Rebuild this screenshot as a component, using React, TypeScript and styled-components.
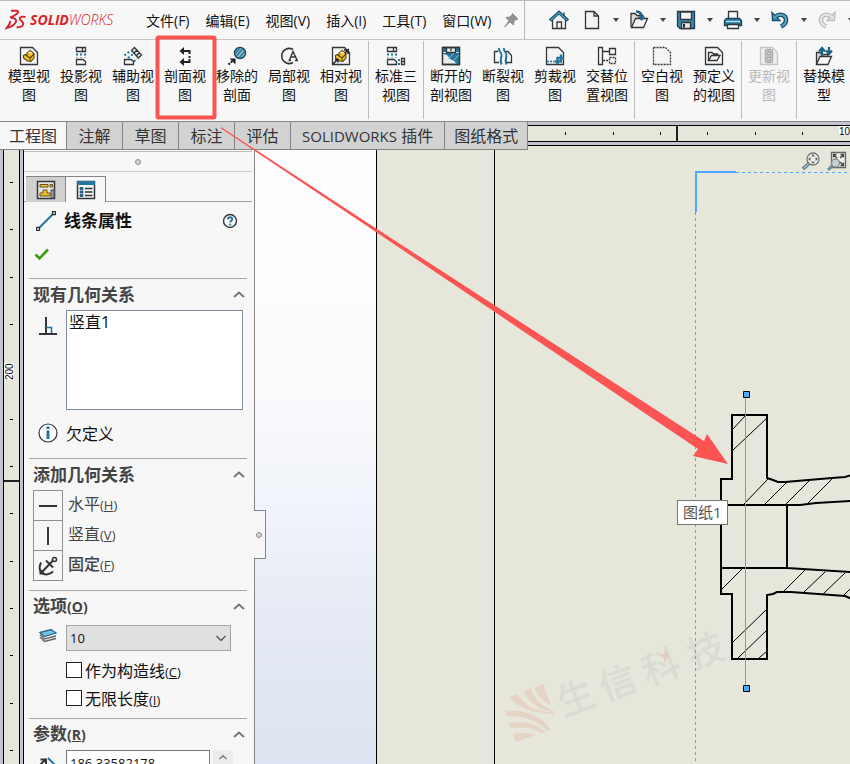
import React from "react";
import styled, { createGlobalStyle } from "styled-components";

const INK = "#333638";
const BLUE = "#24769c";
const YELLOW = "#f2c02c";
const RED = "#fb5452";
const SHEET = "#e6e6da";
const BAND = "#c2c5d0";
const FONT = '"Open Sans", "Noto Sans CJK SC", sans-serif';

const GlobalStyle = createGlobalStyle`
  * { box-sizing: border-box; }
  html, body { margin: 0; height: 100%; overflow: hidden; }
  body { font-family: ${FONT}; font-size: 14px; color: #111; background: #f7f7f7; }
  #root { height: 100%; }
  button, input, select, textarea { font: inherit; color: inherit; }
  svg { display: block; }
`;

const Shell = styled.div`
  position: relative;
  display: flex;
  flex-direction: column;
  height: 100vh;
  overflow: hidden;
`;

/* ---------- title bar ---------- */

const TitleBar = styled.header`
  display: flex;
  flex: none;
  align-items: center;
  height: 40px;
  padding-left: 5px;
  border-top: 1px solid #bcbcbc;
  border-bottom: 1px solid #c4c4c4;
  white-space: nowrap;
  overflow: hidden;
`;

const Brand = styled.div`
  display: flex;
  flex: none;
  align-items: center;
  width: 134px;
  gap: 3px;
  color: #d8232a;
  font: italic 300 14px/20px "Open Sans", sans-serif;

  b { font-weight: 700; }
`;

const Menu = styled.nav`
  display: flex;
  flex: none;
  width: 362px;
  gap: 2px;
`;

const MenuItem = styled.button`
  padding: 2px 7px 0;
  border: 0;
  background: none;
  line-height: 20px;
`;

const Divider = styled.span`
  flex: none;
  width: 1px;
  height: 38px;
  margin: 0 22px 0 3px;
  background: #b9b9b9;
`;

const QuickBar = styled.div`
  display: flex;
  flex: none;
  align-items: center;
`;

const QuickButton = styled.button`
  display: grid;
  place-items: center;
  width: 24px;
  height: 24px;
  padding: 0;
  border: 0;
  background: none;
`;

const CaretButton = styled(QuickButton)`
  width: 23px;
`;

const HomeButton = styled(QuickButton)`
  margin-right: 9px;
`;

/* ---------- ribbon ---------- */

const Ribbon = styled.div`
  display: flex;
  flex: none;
  height: 82px;
  padding-left: 3px;
  border-bottom: 1px solid #858585;
  overflow: hidden;
`;

const RibbonGroup = styled.div`
  display: flex;
  flex: none;

  & + &::before {
    content: "";
    width: 1px;
    height: 78px;
    margin: 1px 1px 0;
    background: #bdbdbd;
  }
`;

const RibbonButton = styled.button`
  display: flex;
  flex-direction: column;
  align-items: center;
  width: 52px;
  padding: 6px 0 0;
  border: 0;
  background: none;
  white-space: pre;
  line-height: 19px;
  color: #111;

  &:disabled { color: #b9b9b9; }
`;

/* ---------- command tabs and rulers ---------- */

const TabRow = styled.div`
  display: flex;
  flex: none;
  height: 28px;
  background: ${SHEET};
`;

const Tab = styled.button<{ $active?: boolean; $pad?: number }>`
  flex: none;
  min-width: 56px;
  height: 28px;
  padding: 0 ${(p) => p.$pad ?? 11}px;
  border: 0;
  border-right: 1px solid #858585;
  border-bottom: 1px solid #858585;
  background: ${(p) => (p.$active ? "#f7f7f7" : "#d2d2d2")};
  color: #333;
  font-size: 16px;
  line-height: 26px;
  white-space: nowrap;

  span { font-size: 15px; }
`;

const HRuler = styled.div`
  flex: 1;
  min-width: 0;
  height: 24px;
  padding: 3px 0;
  border-bottom: 1px solid #000;
  background: ${BAND};
`;

const HScale = styled.div`
  height: 17px;
  border-top: 1px solid #000;
  border-bottom: 1px solid #000;
  background: ${SHEET};
`;

const VRuler = styled.div`
  flex: none;
  width: 24px;
  padding: 0 3px;
  border-right: 1px solid #000;
  background: ${BAND};
`;

const VScale = styled.div`
  width: 17px;
  height: 100%;
  border-left: 1px solid #000;
  border-right: 1px solid #000;
  background: ${SHEET};
`;

const Body = styled.main`
  display: flex;
  flex: 1;
  min-height: 0;
`;

/* ---------- property panel ---------- */

const Panel = styled.aside`
  position: relative;
  z-index: 1;
  flex: none;
  width: 231px;
  border-right: 1px solid #858585;
  background: #f7f7f7;
`;

const Grip = styled.div`
  display: grid;
  place-items: center;
  height: 21px;
  margin: 1px 2px 0 0;
  border-top: 1px solid #bdbdbd;
  border-bottom: 1px solid #c9c9c9;
`;

const GripDot = styled.span`
  width: 6px;
  height: 6px;
  border: 1px solid #8c8c8c;
  border-radius: 50%;
  background: #d4d4d4;
`;

const PanelTabs = styled.div`
  display: flex;
  height: 30px;
  margin-right: 2px;
  padding: 4px 0 0 2px;
  border-bottom: 1px solid #9f9f9f;
`;

const PanelTab = styled.button<{ $active?: boolean }>`
  display: grid;
  place-items: center;
  width: 40px;
  height: 26px;
  padding: 0;
  border: 0;
  border-top: 1px solid #858585;
  border-right: 1px solid #858585;
  background: ${(p) => (p.$active ? "#f7f7f7" : "#d0d0d0")};
`;

const PanelHeader = styled.div`
  display: flex;
  align-items: center;
  gap: 8px;
  height: 38px;
  padding: 0 16px 0 12px;
`;

const PanelTitle = styled.h1`
  flex: 1;
  margin: 0;
  font-size: 17px;
  line-height: 24px;
`;

const IconButton = styled.button`
  display: grid;
  place-items: center;
  padding: 0;
  border: 0;
  background: none;
`;

const ConfirmRow = styled.div`
  display: flex;
  height: 38px;
  padding: 6px 0 16px 10px;
`;

const Section = styled.section`
  margin: 0 7px 0 5px;
  border-top: 1px solid #a6a6a6;
`;

const Key = styled.span`
  font-size: 13px;
`;

const SectionHead = styled.h2`
  display: flex;
  align-items: center;
  justify-content: space-between;
  height: 31px;
  margin: 0;
  padding: 0 1px 0 4px;
  color: #444;
  font-size: 17px;
  line-height: 24px;

  ${Key} { font-size: 14px; }
`;

const FieldGrid = styled.div<{ $end?: number }>`
  display: grid;
  grid-template-columns: 37px minmax(0, 1fr);
  justify-items: center;
  padding-right: ${(p) => p.$end ?? 4}px;
`;

const IconSlot = styled.div`
  padding-top: 6px;
`;

const RelationList = styled.textarea`
  width: 100%;
  height: 100px;
  padding: 0 2px;
  border: 1px solid #7f8aa6;
  outline: 0;
  resize: none;
  background: #fff;
  font-size: 16px;
  line-height: 22px;
`;

const Status = styled.div`
  display: grid;
  grid-template-columns: 37px 1fr;
  align-items: center;
  justify-items: center;
  height: 48px;
  padding-bottom: 2px;
  font-size: 16px;

  p { justify-self: start; margin: 0; }
`;

const RelationButtons = styled.div`
  padding: 0 0 10px 4px;
`;

const RelationButton = styled.button<{ $strong?: boolean }>`
  display: flex;
  align-items: flex-start;
  gap: 5px;
  height: 30px;
  padding: 0;
  border: 0;
  background: none;
  color: #444;
  font-size: 16px;
  font-weight: ${(p) => (p.$strong ? 500 : 400)};
  line-height: 28px;
`;

const RelationIcon = styled.span`
  display: grid;
  place-items: center;
  width: 30px;
  height: 31px;
  border: 1px solid #8e8e8e;
`;

const Options = styled.div`
  padding: 3px 0 6px;
`;

const SelectWrap = styled.div`
  position: relative;
  width: 100%;
  margin-bottom: 5px;

  svg { position: absolute; right: 3px; top: 8px; pointer-events: none; }
`;

const LayerSelect = styled.select`
  appearance: none;
  display: block;
  width: 100%;
  height: 26px;
  padding: 0 3px;
  border: 1px solid #a3a3a3;
  border-radius: 0;
  background: #e0e0e0;
  font-size: 13px;
`;

const CheckLabel = styled.label`
  display: flex;
  align-items: center;
  gap: 3px;
  height: 28px;
  padding-left: 37px;
  font-size: 16px;
`;

const Check = styled.input`
  appearance: none;
  width: 16px;
  height: 16px;
  margin: 0;
  border: 1px solid #222;
  background: #fff;
`;

const NumberRow = styled.div`
  display: flex;
  gap: 3px;
  width: 100%;
`;

const NumberInput = styled.input`
  flex: 1;
  min-width: 0;
  height: 26px;
  padding: 0 3px;
  border: 1px solid #777;
  background: #fff;
  font-size: 13px;
`;

const SpinButton = styled(IconButton)`
  width: 20px;
  height: 14px;
  background: #ececec;
`;

const PanelHandle = styled.button`
  position: absolute;
  left: 100%;
  top: 360px;
  display: grid;
  place-items: center;
  width: 12px;
  height: 49px;
  padding: 0 2px 0 0;
  border: 1px solid #858585;
  border-left: 0;
  background: #f7f7f7;
`;

/* ---------- drawing area ---------- */

const Viewport = styled.div`
  position: relative;
  flex: 1;
  min-width: 0;
  background: linear-gradient(180deg, #fdfdfd 0, #fcfcfd 35%, #f1f4fa 57%, #e6ebf5 75%, #dde3f0 100%);
`;

const Drawing = styled.svg`
  width: 100%;
  height: 100%;
`;

const HudBar = styled.div`
  position: absolute;
  top: 1px;
  right: 3px;
  display: flex;
  gap: 6px;
`;

const SheetTip = styled.div`
  position: absolute;
  left: 422px;
  top: 350px;
  padding: 0 5px;
  border: 1px solid #767676;
  background: #fff;
  color: #555;
  font-size: 15px;
  line-height: 23px;
`;

const Annotation = styled.svg`
  position: absolute;
  left: 0;
  top: 0;
  z-index: 2;
  pointer-events: none;
`;

/* ---------- icons ---------- */

const Icon = ({ children, size = 20 }: { children: React.ReactNode; size?: number }) => (
  <svg width={size} height={size} viewBox={`0 0 ${size} ${size}`} fill="none" stroke={INK} strokeWidth="1.3" aria-hidden="true">
    {children}
  </svg>
);

const Page = ({ fill = "#f4f4f4", color = INK }: { fill?: string; color?: string }) => (
  <path d="M1.5 1.5H13.5L18.5 6.5V18.5H1.5Z" fill={fill} stroke={color} />
);

const Part = () => (
  <g stroke="#59420d" strokeWidth="1.1">
    <path d="M4.5 9.5L6.5 8.5L8 10V7L11 4.500L15 7.500V12L12 15.500L8.500 15L4.500 12Z" fill={YELLOW} />
    <path d="M8 10L11 12L15 8M11 12V15" />
    <path d="M9 7L11 6L13 7.500" stroke="#fff0a8" />
  </g>
);

const Dashes = ({ d }: { d: string }) => <path d={d} stroke={BLUE} strokeWidth="2" strokeDasharray="2 2" />;

const ModelIcon = () => <Icon><Page /><Part /></Icon>;

const ProjectedIcon = () => (
  <Icon>
    <path d="M5.5 1.5H14.5V5.5H5.5ZM11.5 1.5V5.5" fill="#f4f4f4" />
    <Dashes d="M6 7.5V12M14 7.5V12M10 7.5V12" />
    <path d="M5.5 13.5H12L14.5 15.5V18.5H5.5Z" fill="#f4f4f4" />
  </Icon>
);

const AuxIcon = () => (
  <Icon>
    <path d="M8.5 4.5L11.5 1.5L18.5 9L15.5 12ZM11 7L14 4M13.5 9.500L16.500 6.500" fill="#e4e4e4" />
    <Dashes d="M1.500 9.500L7 5M5 12L10 8M11 15.500L14 12.500" />
    <path d="M1.500 13.500H8L10.500 15.500V18.500H1.500Z" fill="#f4f4f4" />
  </Icon>
);

const SectionIcon = () => (
  <Icon>
    <path d="M7 5H14.5V8M14.5 10V12M14.5 13V16H7" stroke="#222" strokeWidth="2" />
    <path d="M9 1V9L4.500 5ZM9 12V20L4.500 16Z" fill="#222" stroke="none" />
  </Icon>
);

const RemovedIcon = () => (
  <Icon>
    <circle cx="13" cy="7" r="5.500" fill="#9cbccb" stroke="#1e4a60" strokeWidth="1.500" />
    <path d="M8.500 7.500L12.500 2.500M9.500 10L15.500 3M12 12L17.500 5.500" stroke={BLUE} strokeWidth="1.500" />
    <path d="M1.500 18.500L6 14.500" stroke="#222" strokeWidth="2" strokeDasharray="2 1" />
    <path d="M2.500 12.500H8.500V18.500L6.500 16.500L4.500 14.500Z" fill="#222" stroke="none" />
  </Icon>
);

const DetailIcon = () => (
  <Icon>
    <path d="M14 3.500A7.500 7.500 0 1 0 14 16.500" strokeWidth="1.600" />
    <path d="M10.500 14L14 5.500L18 14M12 11H16.500M9.500 14.500H12M16 14.500H19" strokeWidth="1.500" />
  </Icon>
);

const RelativeIcon = () => (
  <Icon>
    <Page />
    <Part />
    <path d="M2 18L6 14M4 13.500H7V16.500M18 3L14 7M13 4H17V8" stroke="#222" strokeWidth="1.500" />
  </Icon>
);

const ThreeViewIcon = () => (
  <Icon>
    <path d="M1.500 1.500H10.500V5.500H1.500ZM7.500 1.500V5.500" fill="#f4f4f4" />
    <Dashes d="M2 7.500V12M6 7.500V12M10 7.500V12M12 14H15M12 18H15" />
    <path d="M1.500 13.500H8L10.500 15.500V18.500H1.500ZM15.500 12.500H18.500V18.500H15.500ZM15.500 15.500H18.500" fill="#f4f4f4" />
  </Icon>
);

const BrokenSectionIcon = () => (
  <Icon>
    <path d="M1.500 1.500H18.500V18.500H1.500Z" fill="#eceeee" />
    <path d="M2 7H18V18H16L13 15L9 13L6 9L2 8Z" fill={BLUE} stroke="none" />
    <path d="M7 13L14 6M12 15L18 9" stroke="#8fc0d6" strokeWidth="1" />
    <path d="M2 2H5V6H2ZM15 2H18V6H15Z" fill={BLUE} stroke="none" />
    <path d="M1.500 1.500H18.500V18.500H1.500ZM5.500 2V6.500H14.500V2M10 2V5" />
  </Icon>
);

const BreakIcon = () => (
  <Icon>
    <path d="M5 5.500H1.500V16.500H6M13 5.500H15L18.500 9.500V16.500H14" />
    <path d="M6 2C5 5 9.500 7 8.500 10S7 15 8.500 18.500M11 2C10 5 14.500 7 13.500 10S12 15 13.500 18.500" stroke={BLUE} strokeWidth="2" />
  </Icon>
);

const CropIcon = () => (
  <Icon>
    <Page />
    <path d="M2 15.500H9" stroke={BLUE} strokeWidth="1.500" strokeDasharray="2 1" />
    <path d="M9.500 15.500H16V8.500M12.500 18V12H19" stroke={BLUE} strokeWidth="2.400" />
  </Icon>
);

const AlternateIcon = () => (
  <Icon>
    <path d="M1.500 1.500H5.500V18.500H1.500ZM5.500 5.500H13M12.500 2.500H18.500V8.500H12.500Z" fill="#f4f4f4" />
    <path d="M6 14.500H12M12.500 11.500H18.500V17.500H12.500Z" strokeDasharray="2 1" />
  </Icon>
);

const EmptyIcon = () => (
  <Icon><path d="M1.500 1.500H13.500L18.500 6.500V18.500H1.500Z" fill="#f4f4f4" strokeDasharray="2 1" /></Icon>
);

const PredefinedIcon = () => (
  <Icon>
    <Page />
    <path d="M4.500 14.500V6.500H8L9.500 8H13.500V9.500M4.500 14.500L7.500 9.500H16L13 14.500Z" />
  </Icon>
);

const UpdateIcon = () => (
  <Icon>
    <Page fill="#ececec" color="#c6c6c6" />
    <rect x="6.500" y="3.500" width="7" height="13" rx="2" fill="#c4c4c4" stroke="#adadad" />
    <circle cx="10" cy="7.500" r="1.500" fill="#e8e8e8" stroke="#aaa" />
    <circle cx="10" cy="12.500" r="1.500" fill="#e8e8e8" stroke="#aaa" />
  </Icon>
);

const ReplaceIcon = () => (
  <Icon>
    <path d="M2.500 18V6.500H6L8 8.500H14V11" fill="#d9d9d9" />
    <path d="M2.500 18.500L6 10.500H17.500L14 18.500Z" fill="#f7f7f7" />
    <path d="M8 10V3M5 5.500L8 2L11 5.500" stroke="#1e6286" strokeWidth="2.200" />
    <path d="M15 1V7M12 4.500L15 8L18 4.500" stroke="#1e6286" strokeWidth="2.200" />
  </Icon>
);

const Caret = () => (
  <svg width="6" height="4" aria-hidden="true"><path d="M0 0H6L3 4Z" fill="#444" /></svg>
);

const Chevron = ({ down, light, small }: { down?: boolean; light?: boolean; small?: boolean }) => (
  <svg
    width={small ? 10 : 14}
    height={small ? 7 : 10}
    viewBox="0 0 14 10"
    fill="none"
    stroke={light ? "#555" : "#777"}
    strokeWidth={light ? 1.3 : 2}
    aria-hidden="true"
  >
    <path d={down ? "M2.500 3L7 7.500L11.500 3" : "M2 7L7 2.500L12 7"} />
  </svg>
);

const HomeIcon = () => (
  <Icon>
    <path d="M3.500 9V18.500H16.500V9L10 3Z" fill="#f5f5f5" />
    <path d="M8 18.500V12H12.500V18.500M15 2.500V7" />
    <path d="M1 10.500L10 2.500L19 10.500" stroke="#1c4f6b" strokeWidth="3.200" />
    <path d="M1.500 10.300L10 2.700L18.500 10.300" stroke="#4d9cbf" strokeWidth="1.200" />
  </Icon>
);

const NewIcon = () => (
  <Icon><path d="M3.500 1.500H12L16.500 6V18.500H3.500ZM12 1.500V6H16.500" fill="#f4f4f4" /></Icon>
);

const OpenIcon = () => (
  <Icon>
    <path d="M2 17V3.500H6L8 5.500H14V8" fill="#d9d9d9" />
    <path d="M2.500 17.500L6.500 8.500H18.500L14.500 17.500Z" fill="#f3f3f3" />
    <path d="M7 1.500C11 1.500 12.500 3.500 12.500 7" stroke="#1e6286" strokeWidth="2.500" />
    <path d="M8.500 6.500H16L12.500 11Z" fill="#1e6286" stroke="none" />
  </Icon>
);

const SaveIcon = () => (
  <Icon>
    <path d="M1.500 1.500H18.500V18.500H4L1.500 16Z" fill="#3d88aa" stroke="#163f54" />
    <path d="M4.500 2H15.500V9.500H4.500Z" fill="#f5f5f5" />
    <path d="M5.500 18.500V12.500H14.500V18.500Z" fill="#e8e8e8" />
    <path d="M7 14H9V17.500H7Z" fill="#222" stroke="none" />
  </Icon>
);

const PrintIcon = () => (
  <Icon>
    <path d="M5.500 9V1.500H14.500V9" fill="#f7f7f7" />
    <path d="M3.500 8.500H16.500L18.500 10.500V15.500H1.500V10.500Z" fill="#2b7ba0" stroke="#14445c" />
    <path d="M3 11.500H17" stroke="#bfe0ee" />
    <path d="M4.500 14.500H15.500V18.500H4.500Z" fill="#f7f7f7" />
  </Icon>
);

const UndoIcon = ({ redo }: { redo?: boolean }) => (
  <Icon>
    <g transform={redo ? "translate(20 0) scale(-1 1)" : undefined}>
      <path d="M5 7C10 3 16 5 16 10C16 13 14 15 11 16.500" stroke={redo ? "#bdbdbd" : "#174f6c"} strokeWidth="4.500" />
      <path d="M2 2.500L2.500 10.500H10Z" fill={redo ? "#e2e2e2" : "#4390b3"} stroke={redo ? "#bdbdbd" : "#174f6c"} />
      <path d="M5 7C10 3 16 5 16 10C16 13 14 15 11.500 16" stroke={redo ? "#e6e6e6" : "#5ba5c4"} strokeWidth="2" />
    </g>
  </Icon>
);

const PinIcon = () => (
  <Icon>
    <path d="M11.500 3.500L17 9L15 9.500L13 11.500L12.500 15L9 12L3.500 17L8 11L5 7.500L8.500 7L11 5Z" fill="#929292" stroke="#929292" strokeWidth="1" />
  </Icon>
);

const DsMark = () => (
  <svg width="22" height="22" viewBox="0 0 22 22" fill="none" stroke="#d8232a" strokeWidth="1.900" aria-hidden="true">
    <path d="M6 1.800H11.500C15.500 2 12 6.500 5 8.500" />
    <path d="M6 8.800C14 9 12.500 16 1.500 19.200C3.500 17 5 14.500 5.500 12" />
    <path d="M20.500 8C15.500 6.800 13 9 16 11.500C20 14.500 18.500 18.500 11.500 18.300" />
  </svg>
);

const HelpIcon = () => (
  <Icon size={16}>
    <circle cx="8" cy="8" r="6.500" fill="#fafafa" strokeWidth="1.400" />
    <path d="M5.800 6.300C6 3.500 10.500 3.700 10.300 6.200C10.200 7.700 8.200 7.700 8.200 9.500M8.200 10.800V12.500" stroke={BLUE} strokeWidth="1.900" />
  </Icon>
);

const LineIcon = () => (
  <Icon>
    <path d="M2.500 17.500L17.500 2.500" stroke={BLUE} strokeWidth="2" />
    <path d="M0.500 16.500H3.500V19.500H0.500ZM16.500 0.500H19.500V3.500H16.500Z" fill="#fff" />
  </Icon>
);

const OkIcon = () => (
  <Icon size={16}><path d="M1.500 8.500L5.500 12.500L14 3.500" stroke="#3b9c10" strokeWidth="2.600" /></Icon>
);

const PerpIcon = () => (
  <Icon>
    <path d="M8 1V18M1 18H19" strokeWidth="2" />
    <path d="M8 11.500H13.500V17" stroke={BLUE} strokeWidth="1.600" />
  </Icon>
);

const InfoIcon = () => (
  <Icon>
    <circle cx="10" cy="10" r="9" fill="#fbfbfb" strokeWidth="1.200" />
    <path d="M10 7.500V16M10 3.500V6" stroke={BLUE} strokeWidth="3" />
  </Icon>
);

const AnchorIcon = () => (
  <Icon>
    <path d="M4 16L15 4.500M8 4.500L15 11.500M3 6.500C1 11 1.500 15 4 17C7 19.500 12 18.500 15 15.500" strokeWidth="2" />
    <circle cx="16.500" cy="3.500" r="2" strokeWidth="1.600" />
    <path d="M1.500 18.500V12L8 18.500Z" fill={INK} stroke="none" />
  </Icon>
);

const LayersIcon = () => (
  <Icon>
    <path d="M2 12L6.500 16.500L18 13.500M2 9.500L6.500 14L18 11" stroke="#666" />
    <path d="M2 7.500L13 4.500L18 8L6.500 11.500Z" fill="#74c0df" stroke="#2b6d8c" />
  </Icon>
);

const ParamIcon = () => (
  <Icon>
    <path d="M10 2L19 11" stroke={BLUE} strokeWidth="2" />
    <path d="M1 10L8 3M2.500 3.500H8V9" strokeWidth="2" />
    <path d="M0 15L6 9L9 12Z" fill={INK} />
  </Icon>
);

const TreeIcon = () => (
  <Icon>
    <path d="M1.500 1.500H18.500V18.500H1.500Z" fill="#e4e4e4" strokeWidth="1.500" />
    <path d="M4 4.500H12V7H4ZM14 4.500H16.500V7H14ZM7 10H11V13H14V16H4V13H7Z" fill={YELLOW} stroke="#6b500f" strokeWidth="1" />
    <path d="M15 10H18V18H15Z" fill="#999" stroke="#555" strokeWidth="1" />
  </Icon>
);

const PropsIcon = () => (
  <Icon>
    <path d="M1.500 1.500H18.500V18.500H1.500Z" fill="#f4f4f4" strokeWidth="1.500" />
    <path d="M1 1H19V5H1Z" fill={BLUE} stroke="none" />
    <path d="M9 8.500H16.500M9 12H16.500M9 15.500H16.500" />
    <path d="M4 7.500H7V9.500H4ZM4 11H7V13H4ZM4 14.500H7V16.500H4Z" fill={BLUE} stroke="#1c4f6b" strokeWidth="0.800" />
  </Icon>
);

const ZoomFitIcon = () => (
  <Icon>
    <path d="M2 18L9 11.500" stroke="#4c6c7c" strokeWidth="3.500" />
    <path d="M2.500 17.500L8 12.500" stroke="#a9c3ce" strokeWidth="1.500" />
    <circle cx="12" cy="8" r="6" fill="#f0f0ea" stroke="#777" />
    <path d="M12 3L14 5.500H10ZM12 13L14 10.500H10ZM7 8L9.500 6V10ZM17 8L14.500 6V10Z" fill="#666" stroke="none" />
  </Icon>
);

const ZoomAreaIcon = () => (
  <Icon>
    <path d="M4.500 1.500H18.500V16.500H4.500Z" fill="#efefe9" stroke="#666" />
    <path d="M6.500 3.500L10 7M16.500 3.500L13 7M16.500 14.500L13 11M6.500 6.500V3.500H9.500M13.500 3.500H16.500V6.500M16.500 11.500V14.500H13.500" stroke="#444" />
    <path d="M1 19L6 14" stroke="#6c8d9c" strokeWidth="3" />
    <circle cx="8.500" cy="12" r="4" fill="#c8d2d4" stroke="#888" />
  </Icon>
);

/* ---------- data ---------- */

type Tool = { label: string; icon: React.FC; disabled?: boolean };

const RIBBON: Tool[][] = [
  [
    { label: "模型视\n图", icon: ModelIcon },
    { label: "投影视\n图", icon: ProjectedIcon },
    { label: "辅助视\n图", icon: AuxIcon },
    { label: "剖面视\n图", icon: SectionIcon },
    { label: "移除的\n剖面", icon: RemovedIcon },
    { label: "局部视\n图", icon: DetailIcon },
    { label: "相对视\n图", icon: RelativeIcon },
  ],
  [{ label: "标准三\n视图", icon: ThreeViewIcon }],
  [
    { label: "断开的\n剖视图", icon: BrokenSectionIcon },
    { label: "断裂视\n图", icon: BreakIcon },
    { label: "剪裁视\n图", icon: CropIcon },
    { label: "交替位\n置视图", icon: AlternateIcon },
  ],
  [
    { label: "空白视\n图", icon: EmptyIcon },
    { label: "预定义\n的视图", icon: PredefinedIcon },
  ],
  [{ label: "更新视\n图", icon: UpdateIcon, disabled: true }],
  [{ label: "替换模\n型", icon: ReplaceIcon }],
];

const MENUS = ["文件(F)", "编辑(E)", "视图(V)", "插入(I)", "工具(T)", "窗口(W)"];

const QUICK: { name: string; icon: React.ReactNode }[] = [
  { name: "新建", icon: <NewIcon /> },
  { name: "打开", icon: <OpenIcon /> },
  { name: "保存", icon: <SaveIcon /> },
  { name: "打印", icon: <PrintIcon /> },
  { name: "撤消", icon: <UndoIcon /> },
  { name: "重做", icon: <UndoIcon redo /> },
];

const H_TICKS = [37, 85, 132, 179, 227, 274];
const V_TICKS = [32, 79, 127, 174, 222, 269, 316, 363, 411, 458, 505, 553, 600];

const Hotkey = ({ k }: { k: string }) => <Key>(<u>{k}</u>)</Key>;

const SectionTitle = ({ text, hotkey }: { text: string; hotkey?: string }) => (
  <SectionHead>
    <span>{text}{hotkey && <Hotkey k={hotkey} />}</span>
    <IconButton aria-label={`折叠${text}`}><Chevron /></IconButton>
  </SectionHead>
);

const HATCH =
  "M732 430L746 415M732 451L767 418M744 504L768 479M765 504L787 482M786 504L809 481M808 503L832 479" +
  "M722 589L742 569M784 591L805 570M804 592L825 572M823 594L845 573M844 595L852 587" +
  "M733 642L767 609M738 658L767 630M759 658L767 651";

/* Shaft cross-section, drawn in page units and moved to the viewport origin. */
const SheetDrawing = () => (
  <Drawing aria-label="工程图图纸">
    <g transform="translate(-255 -150)">
      <rect x="376" y="150" width="100%" height="100%" fill={SHEET} />
      <path d="M376.500 150V4000M494.500 150V4000" stroke="#000" />
      <g fill="#e5d3c6">
        <path d="M509 697L518 694C523 704 534 712 553 712L554 714C532 713 518 708 509 697Z" />
        <path d="M523 691L531 689C536 701 543 707 553 710L553 712C538 709 529 702 523 691Z" />
        <path d="M534 688L543 684L551 705C543 701 538 696 534 688Z" />
        <path d="M505 711C522 710 541 714 551 730L547 731C536 719 524 716 507 716Z" />
        <path d="M509 723C523 721 533 722 546 732L541 733C532 727 523 727 511 728Z" />
        <path d="M513 734C523 732 529 733 536 735L516 742Z" />
      </g>
      <g transform="translate(568 715) rotate(-20)" fill="#dbdbd3" fontFamily='"Noto Sans CJK SC", sans-serif' fontSize="37" fontWeight="500">
        <text x="-5 39 85 133">生信科技</text>
      </g>
      <path d="M666 650L668 655L671 656L667 658L665 662L663 657L660 656L664 654Z" fill="#e8cabd" />
      <path d="M736 172.500H4000M695.500 212V4000" stroke="#55a6f3" strokeDasharray="3 3" />
      <path d="M696 212V172H736" fill="none" stroke="#4da6ff" strokeWidth="2" />
      <path d={HATCH} stroke="#000" />
      <path
        d="M852 475L845 477L832 478L785 482H778L773 480L767 478V415H732V479H721V594H732V659H767V595L773 594L777 592H791L845 596L852 599M721 505H800L816 503L852 501M721 568H787L852 572M787 505V568"
        fill="none"
        stroke="#000"
        strokeWidth="2"
      />
      <path d="M745.500 395V688" stroke="#55a6f3" />
      <path d="M743.500 391.500H749.500V397.500H743.500ZM743.500 685.500H749.500V691.500H743.500Z" fill="#4da6ff" stroke="#000" />
    </g>
  </Drawing>
);

export default function App() {
  return (
    <Shell>
      <GlobalStyle />
      <TitleBar>
        <Brand>
          <DsMark />
          <span><b>SOLID</b>WORKS</span>
        </Brand>
        <Menu>
          {MENUS.map((m) => <MenuItem key={m}>{m}</MenuItem>)}
        </Menu>
        <IconButton aria-label="固定菜单"><PinIcon /></IconButton>
        <Divider />
        <QuickBar>
          <HomeButton aria-label="主页"><HomeIcon /></HomeButton>
          {QUICK.map((q) => (
            <React.Fragment key={q.name}>
              <QuickButton aria-label={q.name}>{q.icon}</QuickButton>
              <CaretButton aria-label={`${q.name}选项`}><Caret /></CaretButton>
            </React.Fragment>
          ))}
        </QuickBar>
      </TitleBar>

      <Ribbon>
        {RIBBON.map((group, i) => (
          <RibbonGroup key={i}>
            {group.map(({ label, icon: ToolIcon, disabled }) => (
              <RibbonButton key={label} disabled={disabled}>
                <ToolIcon />
                {label}
              </RibbonButton>
            ))}
          </RibbonGroup>
        ))}
      </Ribbon>

      <TabRow>
        <Tab $active $pad={9}>工程图</Tab>
        <Tab>注解</Tab>
        <Tab>草图</Tab>
        <Tab>标注</Tab>
        <Tab>评估</Tab>
        <Tab><span>SOLIDWORKS</span> 插件</Tab>
        <Tab $pad={9}>图纸格式</Tab>
        <HRuler>
          <HScale>
            <svg width="100%" height="15" aria-hidden="true">
              {H_TICKS.map((x) => <path key={x} d={`M${x}.500 6V9`} stroke="#000" />)}
              <path d="M149 0V15" stroke="#222" strokeWidth="2" />
              <rect x="311" y="0" width="12" height="9" fill="#fff" />
              <text x="311" y="9" fontSize="10" fontFamily="Liberation Sans, sans-serif">10</text>
            </svg>
          </HScale>
        </HRuler>
      </TabRow>

      <Body>
        <VRuler>
          <VScale>
            <svg width="15" height="100%" aria-hidden="true">
              {V_TICKS.map((y) => <path key={y} d={`M6 ${y}.500H9`} stroke="#000" />)}
              <path d="M0 331H15" stroke="#222" strokeWidth="2" />
              <rect x="0" y="213" width="10" height="17" fill="#fff" />
              <text transform="translate(9 230) rotate(-90)" fontSize="10" fontFamily="Liberation Sans, sans-serif">200</text>
            </svg>
          </VScale>
        </VRuler>

        <Panel>
          <Grip><GripDot /></Grip>
          <PanelTabs>
            <PanelTab aria-label="设计树"><TreeIcon /></PanelTab>
            <PanelTab $active aria-label="属性"><PropsIcon /></PanelTab>
          </PanelTabs>
          <PanelHeader>
            <LineIcon />
            <PanelTitle>线条属性</PanelTitle>
            <IconButton aria-label="帮助"><HelpIcon /></IconButton>
          </PanelHeader>
          <ConfirmRow>
            <IconButton aria-label="确定"><OkIcon /></IconButton>
          </ConfirmRow>

          <Section>
            <SectionTitle text="现有几何关系" />
            <FieldGrid>
              <IconSlot><PerpIcon /></IconSlot>
              <RelationList aria-label="现有几何关系" readOnly value="竖直1" />
            </FieldGrid>
            <Status>
              <InfoIcon />
              <p>欠定义</p>
            </Status>
          </Section>

          <Section>
            <SectionTitle text="添加几何关系" />
            <RelationButtons>
              <RelationButton>
                <RelationIcon><Icon><path d="M1 10H19" strokeWidth="2" /></Icon></RelationIcon>
                <span>水平<Hotkey k="H" /></span>
              </RelationButton>
              <RelationButton>
                <RelationIcon><Icon><path d="M10 1V19" strokeWidth="2" /></Icon></RelationIcon>
                <span>竖直<Hotkey k="V" /></span>
              </RelationButton>
              <RelationButton $strong>
                <RelationIcon><AnchorIcon /></RelationIcon>
                <span>固定<Hotkey k="F" /></span>
              </RelationButton>
            </RelationButtons>
          </Section>

          <Section>
            <SectionTitle text="选项" hotkey="O" />
            <Options>
              <FieldGrid $end={16}>
                <LayersIcon />
                <SelectWrap>
                  <LayerSelect aria-label="图层" defaultValue="10">
                    <option>10</option>
                  </LayerSelect>
                  <Chevron down light />
                </SelectWrap>
              </FieldGrid>
              <CheckLabel><Check type="checkbox" /><span>作为构造线<Hotkey k="C" /></span></CheckLabel>
              <CheckLabel><Check type="checkbox" /><span>无限长度<Hotkey k="I" /></span></CheckLabel>
            </Options>
          </Section>

          <Section>
            <SectionTitle text="参数" hotkey="R" />
            <FieldGrid $end={14}>
              <IconSlot><ParamIcon /></IconSlot>
              <NumberRow>
                <NumberInput aria-label="长度" defaultValue="186.33582178" />
                <SpinButton aria-label="增加"><Chevron small /></SpinButton>
              </NumberRow>
            </FieldGrid>
          </Section>
          <PanelHandle aria-label="收起面板"><GripDot /></PanelHandle>
        </Panel>

        <Viewport>
          <SheetDrawing />
          <HudBar>
            <IconButton aria-label="整屏显示全图"><ZoomFitIcon /></IconButton>
            <IconButton aria-label="局部放大"><ZoomAreaIcon /></IconButton>
          </HudBar>
          <SheetTip>图纸1</SheetTip>
        </Viewport>
      </Body>

      <Annotation width="740" height="480" aria-hidden="true">
        <rect x="157.500" y="37.500" width="57" height="80" rx="1" fill="none" stroke={RED} strokeWidth="4" />
        <path d="M221 127L370 224.500L704 441L707 434L728 464L693 456L698 449L370 228L221 128.500Z" fill={RED} />
      </Annotation>
    </Shell>
  );
}
